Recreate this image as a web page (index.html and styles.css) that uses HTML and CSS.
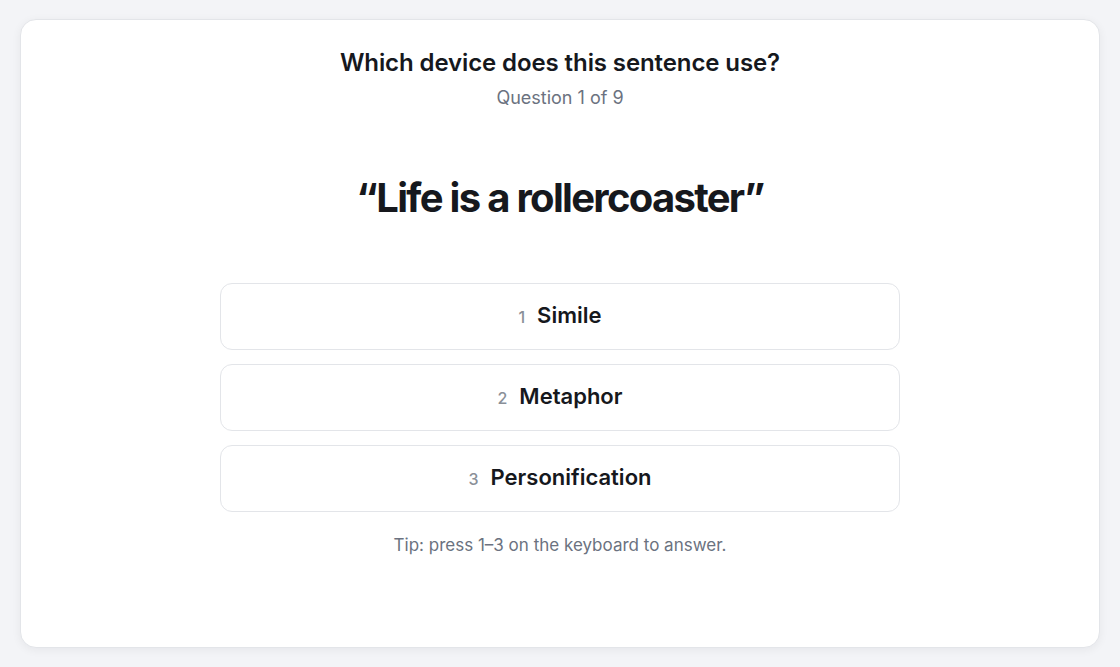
FILE: index.html
```html
<!DOCTYPE html>
<html lang="en">
<head>
    <meta charset="UTF-8">
    <meta name="viewport" content="width=device-width, initial-scale=1.0">
    <title>Quiz</title>
    <link rel="stylesheet" href="styles.css">
</head>
<body>

    <!-- Tarjeta del quiz -->
    <div class="quiz-card">
        <div class="quiz-head">
            <h1>Which device does this sentence use?</h1>
            <p class="counter">Question 1 of 9</p>
        </div>

        <h2 class="sentence">“Life is a rollercoaster”</h2>

        <div class="options">
            <button class="option"><span class="key">1</span>Simile</button>
            <button class="option"><span class="key">2</span>Metaphor</button>
            <button class="option"><span class="key">3</span>Personification</button>
        </div>

        <p class="tip">Tip: press 1–3 on the keyboard to answer.</p>
    </div>

</body>
</html>
```

FILE: styles.css
```css
/* Estilos generales */
body, html {
    margin: 0;
    padding: 0;
    height: 100%;
}

body {
    background-color: #f3f4f7;
    font-family: Inter, "Noto Sans", sans-serif;
    color: #16181d;
    padding: 19px 20px;
    box-sizing: border-box;
}

/* Tarjeta */
.quiz-card {
    height: 100%;
    box-sizing: border-box;
    background-color: #ffffff;
    border: 1px solid #e3e5e9;
    border-radius: 16px;
    box-shadow: 0 2px 10px rgba(17, 24, 39, 0.06);
    display: flex;
    flex-direction: column;
    align-items: center;
    padding-top: 27px;
}

.quiz-head {
    text-align: center;
}

.quiz-head h1 {
    margin: 0;
    font-size: 24px;
    font-weight: 600;
    line-height: 32px;
    letter-spacing: -0.1px;
}

.counter {
    margin: 6px 0 0;
    font-size: 18px;
    line-height: 26px;
    color: #6b7280;
}

.sentence {
    margin: 61px 0 0;
    font-size: 40px;
    font-weight: 700;
    line-height: 52px;
    letter-spacing: -1.7px;
}

/* Opciones */
.options {
    width: 680px;
    margin-top: 59px;
    display: flex;
    flex-direction: column;
    gap: 14px;
}

.option {
    height: 67px;
    padding: 0 0 4px;
    background-color: #ffffff;
    border: 1px solid #e3e5e9;
    border-radius: 12px;
    font-family: inherit;
    font-size: 22px;
    font-weight: 600;
    color: #16181d;
    display: flex;
    justify-content: center;
    align-items: baseline;
    align-content: center;
    flex-wrap: wrap;
    cursor: pointer;
}

.option .key {
    font-size: 16px;
    font-weight: 500;
    color: #8a8f98;
    margin-right: 12px;
}

.tip {
    margin: 21px 0 0;
    font-size: 17px;
    line-height: 24px;
    color: #6b7280;
}
```
